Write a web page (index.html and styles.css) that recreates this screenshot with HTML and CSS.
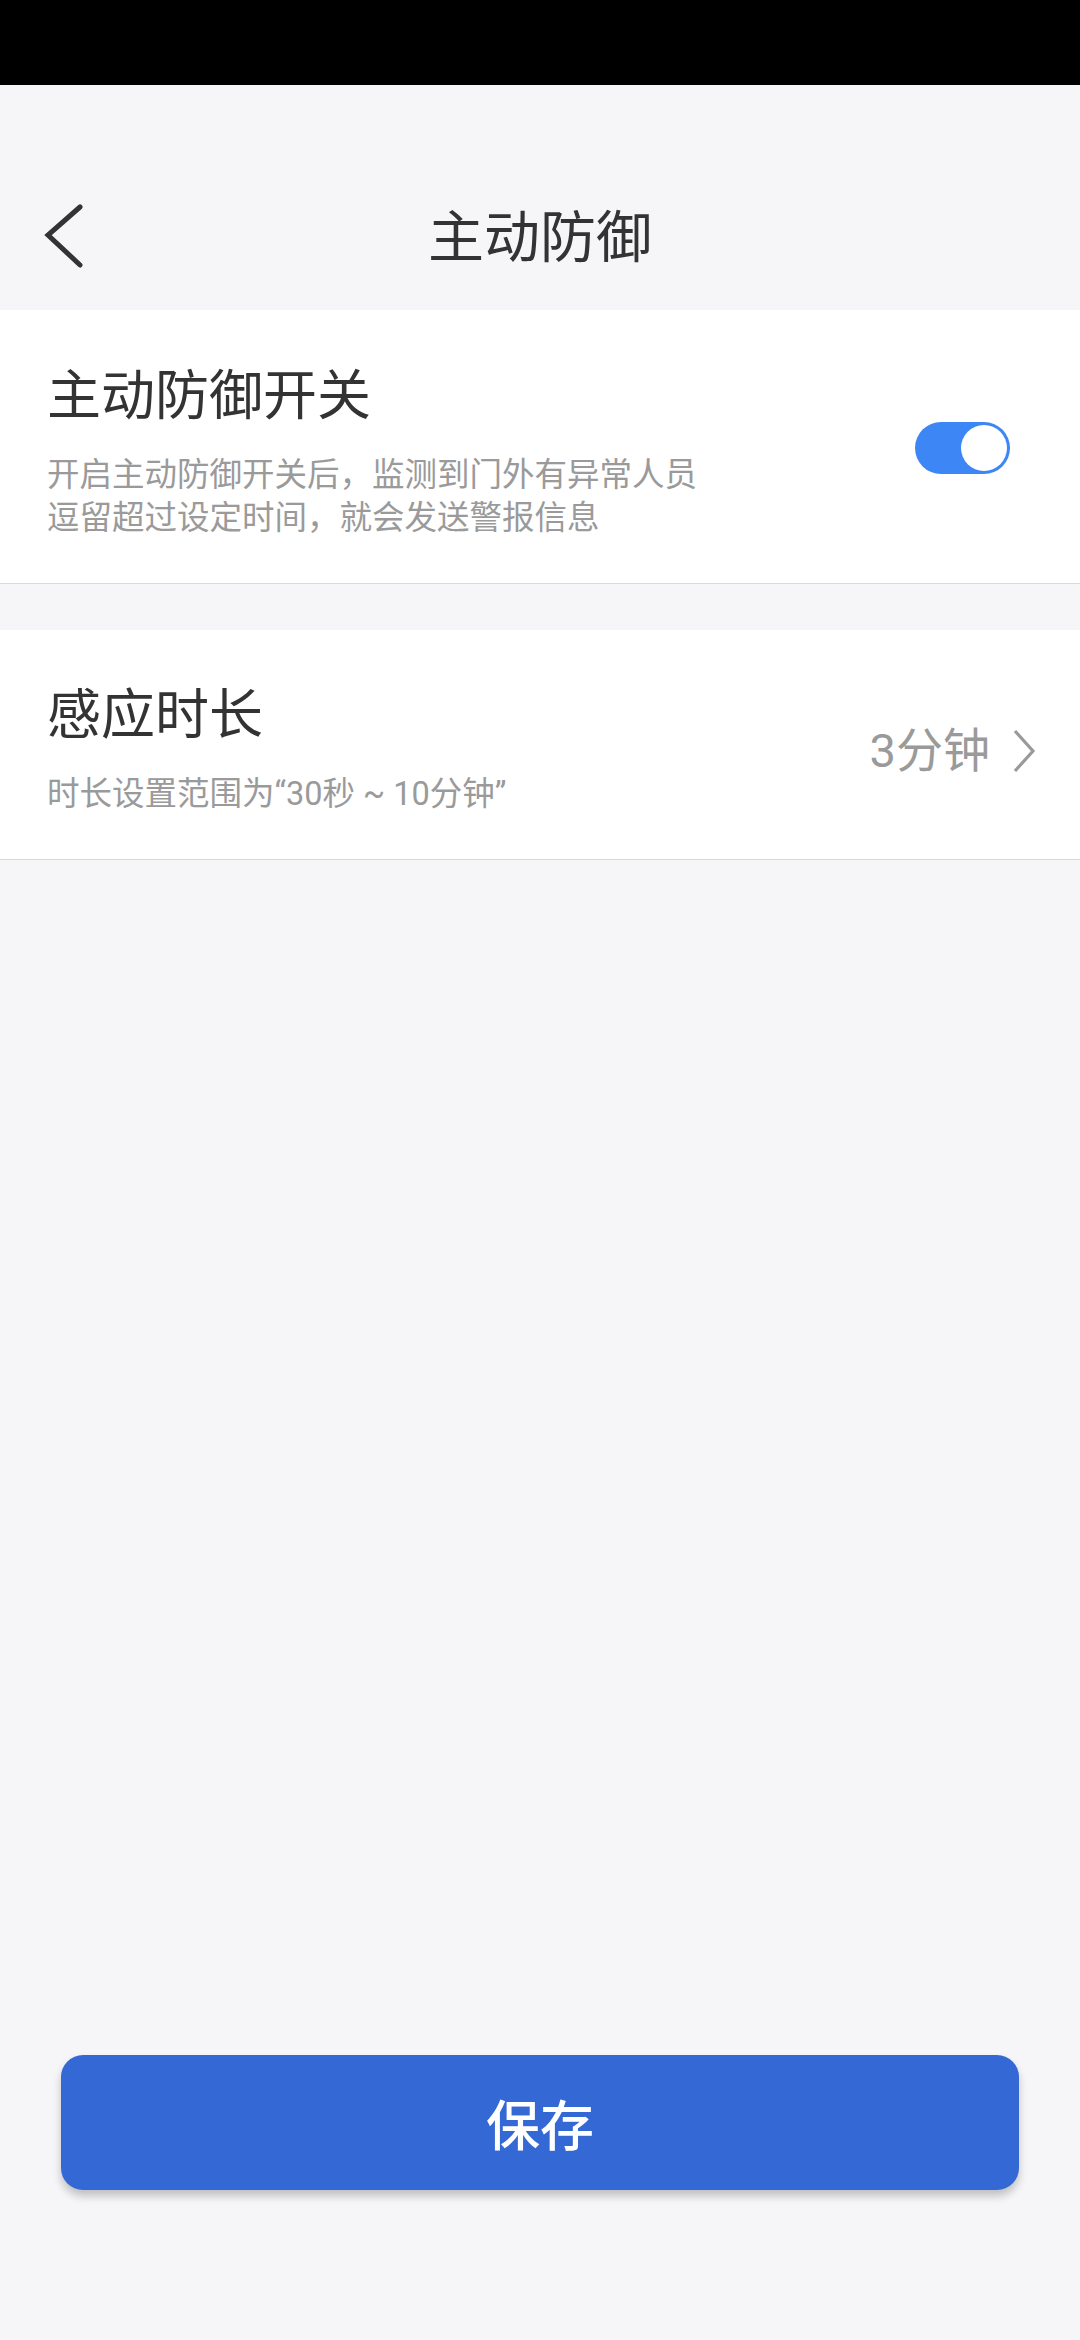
FILE: index.html
```html
<!DOCTYPE html>
<html lang="zh-CN">
<head>
<meta charset="utf-8">
<link rel="stylesheet" href="styles.css">
</head>
<body>
<div class="page">
  <div class="status"></div>
  <header class="header">
    <div class="nav">
      <div class="nav-left">
        <svg class="back" width="44" height="70" viewBox="0 0 44 70"><polyline points="38,5 6,33 38,63" fill="none" stroke="#333" stroke-width="5" stroke-linecap="round" stroke-linejoin="miter"/></svg>
      </div>
      <div class="nav-title">主动防御</div>
      <div class="nav-right"></div>
    </div>
  </header>
  <section class="card">
    <div class="card-text">
      <div class="card-title">主动防御开关</div>
      <div class="card-desc">开启主动防御开关后，监测到门外有异常人员<br>逗留超过设定时间，就会发送警报信息</div>
    </div>
    <div class="toggle"><div class="knob"></div></div>
  </section>
  <div class="spacer"></div>
  <section class="card card-2">
    <div class="card-text">
      <div class="card-title">感应时长</div>
      <div class="card-desc">时长设置范围为“30秒 ~ 10分钟”</div>
    </div>
    <div class="value">
      <span>3分钟</span>
      <svg class="chev" width="24" height="44" viewBox="0 0 24 44"><polyline points="3,2 21,22 3,42" fill="none" stroke="#9a9a9a" stroke-width="3.2"/></svg>
    </div>
  </section>
  <div class="fill"></div>
  <div class="btn-wrap"><button class="save">保存</button></div>
</div>
</body>
</html>
```

FILE: styles.css
```css
* { box-sizing: border-box; }
html, body { margin: 0; padding: 0; }
body {
  width: 1080px;
  height: 2340px;
  background: #f6f6f8;
  font-family: Roboto, "Noto Sans CJK SC", sans-serif;
  color: #333;
}
.page {
  height: 2340px;
  display: flex;
  flex-direction: column;
}
.status {
  height: 85px;
  background: #000;
  flex: none;
}
.header {
  height: 225px;
  background: #f6f6f8;
  padding-top: 92px;
  flex: none;
}
.nav {
  height: 120px;
  display: grid;
  grid-template-columns: 1fr auto 1fr;
  align-items: center;
}
.nav-left {
  padding-left: 42px;
  display: flex;
  align-items: center;
}
.back { display: block; }
.nav-title {
  font-size: 56px;
  line-height: 70px;
  color: #333;
  font-family: "Noto Sans CJK SC", sans-serif;
  margin-top: -8px;
}
.card {
  background: #fff;
  border-bottom: 1px solid #d9d9d9;
  display: flex;
  align-items: center;
  justify-content: space-between;
  padding: 57px 70px 43px 47px;
  flex: none;
}
.card-2 {
  padding: 56px 44px 43px 47px;
}
.card-title {
  font-size: 54px;
  line-height: 60px;
  color: #333;
}
.card-desc {
  margin-top: 27px;
  font-size: 32.5px;
  line-height: 43px;
  color: #9a9a9a;
}
.toggle {
  width: 95px;
  height: 52px;
  border-radius: 26px;
  background: #3d86f5;
  position: relative;
  margin-bottom: 12px;
}
.knob {
  position: absolute;
  right: 3px;
  top: 3px;
  width: 46px;
  height: 46px;
  border-radius: 50%;
  background: #fff;
}
.spacer {
  height: 46px;
  flex: none;
}
.value {
  display: flex;
  align-items: center;
  gap: 22px;
  font-size: 47px;
  line-height: 56px;
  color: #9a9a9a;
}
.chev { display: block; }
.fill { flex: 1; }
.btn-wrap {
  padding: 0 61px 150px 61px;
  flex: none;
}
.save {
  display: block;
  width: 100%;
  height: 135px;
  border: none;
  border-radius: 22px;
  background: #3468d5;
  color: #fff;
  font-family: "Noto Sans CJK SC", sans-serif;
  font-size: 54px;
  font-weight: 500;
  box-shadow: 0 6px 8px rgba(0, 0, 0, 0.22);
}
```
